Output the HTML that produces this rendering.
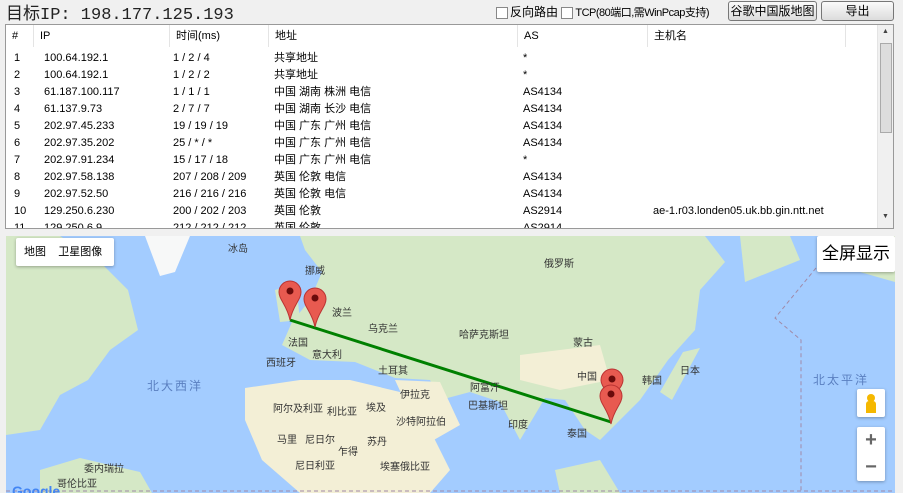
<!DOCTYPE html>
<html><head><meta charset="utf-8"><style>
*{margin:0;padding:0;box-sizing:border-box}
body{width:903px;height:493px;background:#f0f0f0;font-family:"Liberation Sans","Noto Sans CJK SC",sans-serif;font-size:11px;color:#000;position:relative;overflow:hidden}
.abs{position:absolute;white-space:nowrap}
.title{left:6px;top:-1px;font-size:17px;font-family:"Liberation Mono","Noto Sans CJK SC",monospace;color:#222}
.cb{width:12px;height:12px;border:1px solid #888;background:#fff;display:inline-block;vertical-align:middle;margin-right:2px}
.btn{border:1px solid #777;border-radius:3px;background:linear-gradient(#fafafa,#dcdcdc);text-align:center;font-size:12px;line-height:18px}
.table{left:5px;top:24px;width:889px;height:205px;background:#fff;border:1px solid #999;overflow:hidden}
.hd{position:absolute;top:0;height:22px;border-right:1px solid #e4e4e4;line-height:22px;padding-left:6px}
.row{position:absolute;left:0;height:17px;line-height:17px;width:870px}
.row span{position:absolute}
.map{left:6px;top:236px;width:889px;height:257px;background:#a3ccff;overflow:hidden}
.ctl{background:#fff;border-radius:2px;box-shadow:0 1px 3px rgba(0,0,0,.3)}
</style></head><body>
<div class="abs title">目标IP: 198.177.125.193</div>
<div class="abs" style="left:496px;top:3px;font-size:12px"><span class="cb"></span>反向路由 <span class="cb"></span><span style="font-size:11px;letter-spacing:-0.5px">TCP(80端口,需WinPcap支持)</span></div>
<div class="abs btn" style="left:728px;top:1px;width:89px;height:20px">谷歌中国版地图</div>
<div class="abs btn" style="left:821px;top:1px;width:73px;height:20px">导出</div>
<div class="abs table">
<div class="hd" style="left:0;width:28px">#</div>
<div class="hd" style="left:28px;width:136px">IP</div>
<div class="hd" style="left:164px;width:99px">时间(ms)</div>
<div class="hd" style="left:263px;width:249px">地址</div>
<div class="hd" style="left:512px;width:130px">AS</div>
<div class="hd" style="left:642px;width:198px">主机名</div>
<div style="position:absolute;left:871px;top:0;width:17px;height:203px;background:#f0f0f0;border-left:1px solid #e4e4e4"><div style="position:absolute;left:2px;top:18px;width:12px;height:90px;background:#ddd;border:1px solid #aaa"></div><div style="position:absolute;left:4px;top:3px;font-size:7px;color:#444">▲</div><div style="position:absolute;left:4px;top:188px;font-size:7px;color:#444">▼</div></div>
<div class="row" style="top:25px"><span style="left:8px">1</span><span style="left:38px">100.64.192.1</span><span style="left:167px">1 / 2 / 4</span><span style="left:268px">共享地址</span><span style="left:517px">*</span></div>
<div class="row" style="top:42px"><span style="left:8px">2</span><span style="left:38px">100.64.192.1</span><span style="left:167px">1 / 2 / 2</span><span style="left:268px">共享地址</span><span style="left:517px">*</span></div>
<div class="row" style="top:59px"><span style="left:8px">3</span><span style="left:38px">61.187.100.117</span><span style="left:167px">1 / 1 / 1</span><span style="left:268px">中国 湖南 株洲 电信</span><span style="left:517px">AS4134</span></div>
<div class="row" style="top:76px"><span style="left:8px">4</span><span style="left:38px">61.137.9.73</span><span style="left:167px">2 / 7 / 7</span><span style="left:268px">中国 湖南 长沙 电信</span><span style="left:517px">AS4134</span></div>
<div class="row" style="top:93px"><span style="left:8px">5</span><span style="left:38px">202.97.45.233</span><span style="left:167px">19 / 19 / 19</span><span style="left:268px">中国 广东 广州 电信</span><span style="left:517px">AS4134</span></div>
<div class="row" style="top:110px"><span style="left:8px">6</span><span style="left:38px">202.97.35.202</span><span style="left:167px">25 / * / *</span><span style="left:268px">中国 广东 广州 电信</span><span style="left:517px">AS4134</span></div>
<div class="row" style="top:127px"><span style="left:8px">7</span><span style="left:38px">202.97.91.234</span><span style="left:167px">15 / 17 / 18</span><span style="left:268px">中国 广东 广州 电信</span><span style="left:517px">*</span></div>
<div class="row" style="top:144px"><span style="left:8px">8</span><span style="left:38px">202.97.58.138</span><span style="left:167px">207 / 208 / 209</span><span style="left:268px">英国 伦敦 电信</span><span style="left:517px">AS4134</span></div>
<div class="row" style="top:161px"><span style="left:8px">9</span><span style="left:38px">202.97.52.50</span><span style="left:167px">216 / 216 / 216</span><span style="left:268px">英国 伦敦 电信</span><span style="left:517px">AS4134</span></div>
<div class="row" style="top:178px"><span style="left:8px">10</span><span style="left:38px">129.250.6.230</span><span style="left:167px">200 / 202 / 203</span><span style="left:268px">英国 伦敦</span><span style="left:517px">AS2914</span><span style="left:647px">ae-1.r03.londen05.uk.bb.gin.ntt.net</span></div>
<div class="row" style="top:195px"><span style="left:8px">11</span><span style="left:38px">129.250.6.9</span><span style="left:167px">212 / 212 / 212</span><span style="left:268px">英国 伦敦</span><span style="left:517px">AS2914</span></div>
</div>
<div class="abs map">
<svg width="889" height="257" viewBox="6 236 889 257" style="position:absolute;left:0;top:0">
<g fill="#d5e8c6">
<polygon points="6,236 60,236 100,262 128,290 138,330 110,350 88,380 60,395 40,430 6,435"/>
<polygon points="300,236 705,236 725,262 700,290 695,330 668,360 640,400 615,425 600,440 585,430 565,400 545,398 520,440 500,402 470,392 440,400 430,380 395,378 355,362 310,360 282,345 292,322 310,300 322,272 305,250"/>
<polygon points="40,470 80,458 140,472 152,493 40,493"/>
<polygon points="275,290 296,284 300,320 280,322"/>
<polygon points="683,352 700,348 672,400 660,392"/>
<polygon points="740,236 790,236 800,260 745,282"/>
<polygon points="850,236 895,236 895,282 860,272"/>
<polygon points="555,470 600,460 620,493 560,493"/>
</g>
<polygon fill="#f7f8f8" points="145,236 190,236 175,272 160,276"/>
<g fill="#f3efd6">
<polygon points="245,388 300,380 350,380 400,392 430,430 450,470 430,493 300,493 262,460 245,420"/>
<polygon points="395,380 440,382 460,425 425,445"/>
<polygon points="520,355 600,345 610,380 560,390 520,380"/>
</g>
<line x1="290" y1="320" x2="611" y2="422" stroke="#008000" stroke-width="3"/>
<g fill="#e85a50" stroke="#b33" stroke-width="1">
<path d="M290,320 C287,305 279,300 279,292 A11,11 0 1 1 301,292 C301,300 293,305 290,320Z"/>
<path d="M315,327 C312,312 304,307 304,299 A11,11 0 1 1 326,299 C326,307 318,312 315,327Z"/>
<path d="M612,402 C609,392 601,387 601,380 A11,11 0 1 1 623,380 C623,387 615,392 612,402Z"/>
<path d="M611,424 C608,409 600,404 600,396 A11,11 0 1 1 622,396 C622,404 614,409 611,424Z"/>
</g>
<g fill="#6b0b0b"><circle cx="290" cy="291" r="3.5"/><circle cx="315" cy="298" r="3.5"/><circle cx="612" cy="379" r="3.5"/><circle cx="611" cy="394" r="3.5"/></g>
<g fill="none" stroke="#a08aa8" stroke-dasharray="4,3"><polyline points="816,268 775,318 801,340 801,493"/><line x1="6" y1="491" x2="895" y2="491"/></g>
<g font-size="10" fill="#333" font-family="Liberation Sans,Noto Sans CJK SC,sans-serif">
<text x="228" y="252">冰岛</text><text x="305" y="274">挪威</text><text x="332" y="316">波兰</text><text x="368" y="332">乌克兰</text><text x="288" y="346">法国</text><text x="312" y="358">意大利</text><text x="266" y="366">西班牙</text><text x="378" y="374">土耳其</text><text x="400" y="398">伊拉克</text><text x="273" y="412">阿尔及利亚</text><text x="327" y="415">利比亚</text><text x="366" y="411">埃及</text><text x="396" y="425">沙特阿拉伯</text><text x="277" y="443">马里</text><text x="305" y="443">尼日尔</text><text x="367" y="445">苏丹</text><text x="338" y="455">乍得</text><text x="295" y="469">尼日利亚</text><text x="380" y="470">埃塞俄比亚</text><text x="84" y="472">委内瑞拉</text><text x="57" y="487">哥伦比亚</text><text x="544" y="267">俄罗斯</text><text x="459" y="338">哈萨克斯坦</text><text x="573" y="346">蒙古</text><text x="577" y="380">中国</text><text x="642" y="384">韩国</text><text x="680" y="374">日本</text><text x="470" y="391">阿富汗</text><text x="468" y="409">巴基斯坦</text><text x="508" y="428">印度</text><text x="567" y="437">泰国</text>
</g>
<g font-size="12" fill="#5a7fc0" font-family="Liberation Sans,Noto Sans CJK SC,sans-serif" letter-spacing="2"><text x="147" y="390">北大西洋</text><text x="813" y="384">北太平洋</text></g>
</svg>
<div class="abs ctl" style="left:10px;top:2px;width:98px;height:28px;font-size:11px;line-height:28px;padding-left:8px">地图&nbsp;&nbsp;&nbsp;&nbsp;卫星图像</div>
<div class="abs ctl" style="left:811px;top:0;width:78px;height:36px;font-size:17px;line-height:36px;text-align:center">全屏显示</div>
<div class="abs ctl" style="left:851px;top:153px;width:28px;height:28px"><div style="position:absolute;left:10px;top:5px;width:8px;height:8px;border-radius:50%;background:#f5b800"></div><div style="position:absolute;left:9px;top:12px;width:10px;height:12px;border-radius:3px 3px 0 0;background:#f5b800"></div></div>
<div class="abs ctl" style="left:851px;top:191px;width:28px;height:54px;text-align:center;font-size:20px;color:#666;line-height:27px;font-weight:bold">+<br>−</div>
<div class="abs" style="left:6px;top:247px;font-size:14px;font-weight:bold;color:#4285f4">Google</div>
</div>
</body></html>
